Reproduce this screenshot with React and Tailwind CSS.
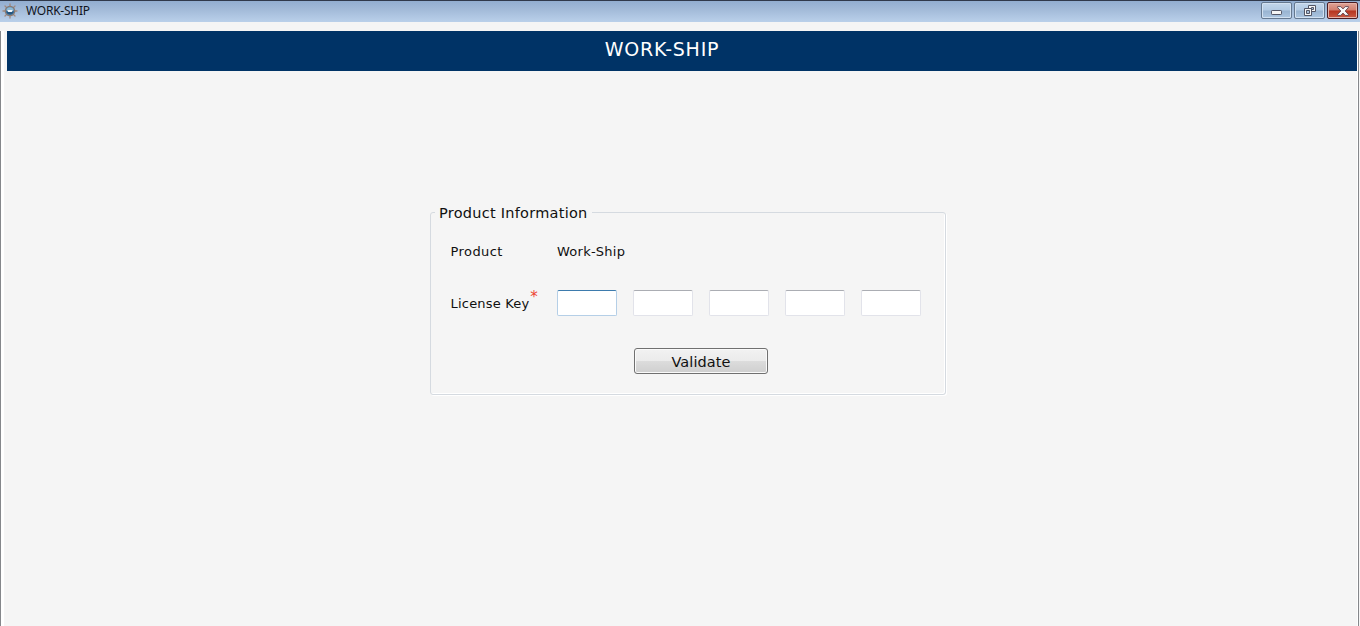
import React from 'react';

function ShipWheel() {
  return (
    <svg className="h-4 w-4 shrink-0" viewBox="0 0 16 16">
      <g stroke="#a08a80" strokeWidth="1.3" strokeLinecap="round">
        <path d="M8 1v14M1 8h14M3 3l10 10M13 3 3 13" />
      </g>
      <circle cx="8" cy="8" r="4.7" fill="#4d83ad" stroke="#8d7b72" strokeWidth="1.3" />
      <path d="M4.2 7.2a3.9 3.9 0 0 1 7.6 0z" fill="#8fb9d4" />
      <path d="M4.2 8.6h7.6a3.9 3.9 0 0 1-7.6 0z" fill="#245580" />
      <path d="M5.2 7h5.6L9.8 9H6.2z" fill="#f4f8fb" />
    </svg>
  );
}

function CaptionButton({ label, danger, children }) {
  const tone = danger
    ? 'border-[#4b1c22] bg-[linear-gradient(#dfa497,#d17d6d_48%,#b5341f_52%,#c95b45)] shadow-[inset_0_0_0_1px_#e6b4a9]'
    : 'border-[#65788f] bg-[linear-gradient(#c3d6eb,#b2cae3_48%,#98b3d0_52%,#acc6e1)] shadow-[inset_0_0_0_1px_#d2e1f1]';
  return (
    <button aria-label={label} className={`flex h-[17px] w-[31px] items-center justify-center rounded-[2px] border ${tone}`}>
      {children}
    </button>
  );
}

function TitleBar() {
  return (
    <header className="flex h-[22px] items-start border-t border-[#30394b] bg-[linear-gradient(#92add0,#a2bad8_40%,#bad0ea)] pr-[2px] pl-[2px]">
      <div className="flex h-[19px] items-center">
        <ShipWheel />
        <span className="ml-[8px] font-['Noto_Sans','Open_Sans',sans-serif] text-[12px] leading-[19px] tracking-[-0.25px] text-[#10141c]">WORK-SHIP</span>
      </div>
      <div className="mt-[1px] ml-auto flex gap-[2px]">
        <CaptionButton label="Minimize">
          <svg className="mt-[4px] h-[5px] w-[11px]" viewBox="0 0 11 5">
            <rect x=".5" y=".5" width="10" height="4" rx=".7" fill="#f5f5f5" stroke="#535666" />
          </svg>
        </CaptionButton>
        <CaptionButton label="Restore">
          <svg className="h-[11px] w-[12px]" viewBox="0 0 12 11">
            <g fill="#f5f5f5" stroke="#535666">
              <path d="M4.5.5h7v6h-7z" />
              <path d="M7.5 2.5h2v2h-2z" fill="#a8c0da" />
              <path d="M.5 3.5h7v7h-7z" />
              <path d="M2.5 5.5h3v3h-3z" fill="#a8c0da" />
            </g>
          </svg>
        </CaptionButton>
        <CaptionButton label="Close" danger>
          <svg className="h-[10px] w-[12px]" viewBox="0 0 12 10">
            <path d="M.6.6h3.2L6 2.9 8.2.6h3.2v1L8.2 5l3.2 3.4v1H8.2L6 7.1 3.8 9.4H.6v-1L3.8 5 .6 1.6z" fill="#f8f8f8" stroke="#5c3f49" strokeWidth=".9" />
          </svg>
        </CaptionButton>
      </div>
    </header>
  );
}

function KeyField({ focused, index }) {
  const tone = focused
    ? 'border-x-[#b5cfe7] border-b-[#b5cfe7] border-t-[#3d7bad]'
    : 'border-x-[#e2e3ea] border-b-[#e2e3ea] border-t-[#abadb3]';
  return <input aria-label={`License key part ${index + 1}`} className={`h-[26px] w-[60px] rounded-[2px] border bg-white px-1 outline-none ${tone}`} />;
}

export default function App() {
  return (
    <div className="flex h-[626px] w-[1360px] flex-col overflow-hidden bg-[#f5f5f5] font-['DejaVu_Sans',sans-serif] text-[#101010]">
      <TitleBar />
      <div className="mt-[9px] flex flex-1 border-l border-[#85878b] bg-white pl-[3px]">
        <div className="flex flex-1 flex-col bg-[#f5f5f5]">
          <h1 className="ml-[3px] flex h-[40px] w-[1350px] justify-center bg-[#003366] pr-[40px] text-[19px] leading-[36px] tracking-[0.75px] text-white">WORK-SHIP</h1>
          <main className="pt-[132px] pl-[426px]">
            <fieldset className="h-[192px] w-[516px] rounded-[3px] border border-[#d5dae0] shadow-[inset_-1px_-1px_0_#ffffff,1px_1px_0_#ffffff]">
              <legend className="ml-[4px] h-[19px] px-[4px] text-[14.5px] leading-[20px] tracking-[0.26px]">Product Information</legend>
              <div className="flex flex-col pl-[19px] text-[13px] tracking-[0.25px]">
                <div className="mt-[20px] flex h-[20px] items-center leading-[20px]">
                  <span className="w-[107px] pl-[0.6px] tracking-[0.4px]">Product</span>
                  <span>Work-Ship</span>
                </div>
                <div className="mt-[28px] flex h-[26px]">
                  <div className="flex w-[107px] pl-[0.6px] leading-[27px]">
                    <span className="tracking-[0.18px]">License Key</span>
                    <span className="ml-[1px] text-[15px] leading-[15px] text-[#ed4432]">*</span>
                  </div>
                  <div className="flex gap-[16px]">
                    {[0, 1, 2, 3, 4].map((index) => <KeyField key={index} index={index} focused={index === 0} />)}
                  </div>
                </div>
                <button className="mt-[32px] ml-[184px] h-[26px] w-[134px] rounded-[3px] border border-[#707070] bg-[linear-gradient(#f2f2f2,#ebebeb_49%,#dcdcdc_51%,#cfcfcf)] pt-[2px] text-[14.5px] leading-[22px] tracking-[0.1px] shadow-[inset_0_0_0_1px_#fafafa]">Validate</button>
              </div>
            </fieldset>
          </main>
        </div>
        <div className="w-[2px] border-r border-[#85878b] bg-white" />
        <div className="w-px bg-[#f5f5f5]" />
      </div>
    </div>
  );
}
